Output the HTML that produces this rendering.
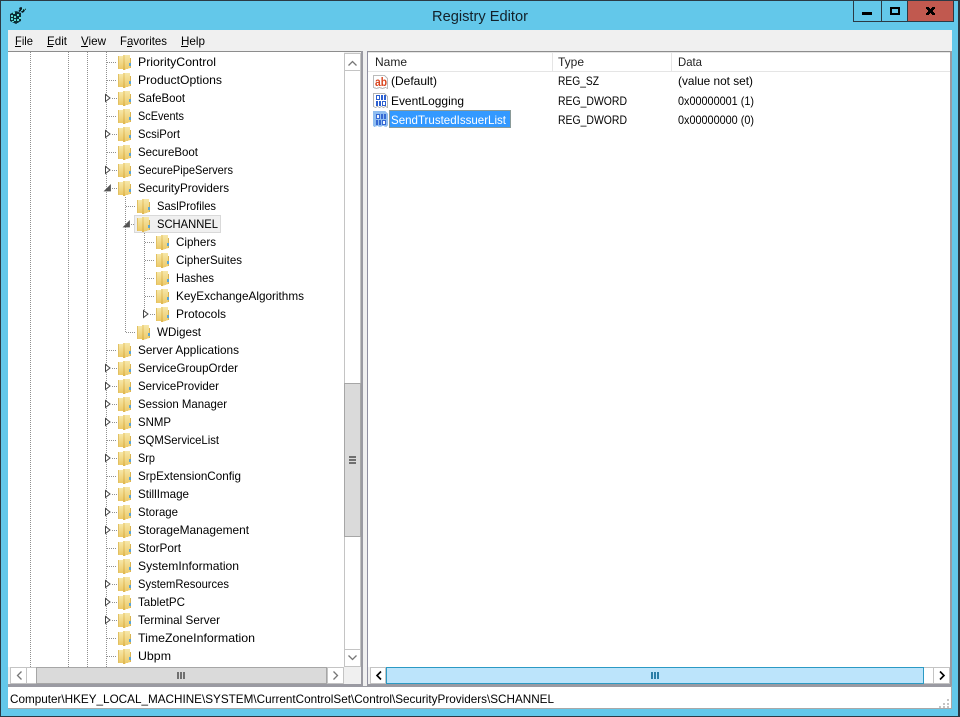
<!DOCTYPE html>
<html><head><meta charset="utf-8"><title>Registry Editor</title>
<style>
html,body{margin:0;padding:0;background:#63c8ea;width:960px;height:717px;overflow:hidden}
svg{display:block;position:absolute;left:0;top:0}
text{font-family:"Liberation Sans",sans-serif;font-size:12px;fill:#000;white-space:pre}
</style></head><body>
<svg width="960" height="717" viewBox="0 0 960 717" xmlns="http://www.w3.org/2000/svg" shape-rendering="crispEdges">
<defs>
<linearGradient id="fg" x1="0" y1="0" x2="0" y2="1"><stop offset="0" stop-color="#f6e7a8"/><stop offset="1" stop-color="#ecc968"/></linearGradient>
<linearGradient id="fd" x1="0" y1="0" x2="0" y2="1"><stop offset="0" stop-color="#f0d78a"/><stop offset="1" stop-color="#dfb64e"/></linearGradient>
<g id="f">
<path d="M1 2h6v13H1z" fill="url(#fg)"/>
<path d="M7 1h6v13l-6 2z" fill="url(#fg)"/>
<path d="M6 1h2v15H6z" fill="url(#fd)"/>
<path d="M1 2h1v13H1z" fill="#e2c062"/>
<path d="M13 4h1v10h-1z" fill="#d9b452"/>
<path d="M12 9h2v3h-2z" fill="#5aa6d6"/>
</g>
<g id="tc"><path d="M1.500 1.500L6 5 1.500 8.500z" fill="#fff" stroke="#444" shape-rendering="auto"/></g>
<g id="te"><path d="M6.500 1L6.500 7 .5 7z" fill="#555" stroke="#555" stroke-width=".8" shape-rendering="auto"/></g>
<g id="hl"><path d="M0 .5h10" stroke="#8f8f8f" stroke-dasharray="1 1"/></g>
<g id="digits">
<path d="M3 2h4v5H3zM8 2h2v5H8zM11 2h2v5h-2zM3 8h2v5H3zM6 8h2v5H6zM9 8h4v5H9z" fill="#2c5fd0"/>
<path d="M4 3h2v3H4zM10 9h2v3h-2z" fill="#fff"/>
</g>
<g id="bin">
<path d="M.5 .5h11l3 3v11l-2-1-2 1-2-1-2 1-2-1-2 1-2-1z" fill="#fff" stroke="#b4b4b4"/>
<use href="#digits"/>
</g>
</defs>

<!-- frame -->
<rect width="960" height="717" fill="#63c8ea"/>
<rect x="0" y="0" width="960" height="1" fill="#2b3a45"/>
<rect x="0" y="0" width="1" height="717" fill="#2b3a45"/>
<rect x="958" y="0" width="2" height="717" fill="#2b3a45"/>
<rect x="0" y="716" width="960" height="1" fill="#2b3a45"/>

<!-- window icon -->
<g>
<path d="M10 14l6-3 5 2v8l-5 3-6-3z" fill="#0c2f38"/>
<path d="M11 15h2v2h-2zM14 16h2v2h-2zM11 18h2v2h-2zM14 19h2v2h-2zM12 21h2v1h-2zM17 14h2v2h-2zM19 17h2v2h-2zM17 19h2v2h-2zM13 12h2v2h-2z" fill="#5fd9d4"/>
<path d="M18 11l3-3 1 1-2 3zM21 12l3-4 2 1-3 4zM19 8l2-1 1 1-2 2z" fill="#0b1c24"/>
<path d="M21 10l1-1 1 1-1 1zM23 9l1-1 1 1-1 1z" fill="#5fd9d4"/>
</g>

<text x="480" y="21" text-anchor="middle" textLength="96" lengthAdjust="spacingAndGlyphs" style="font-size:15px;fill:#13212a" shape-rendering="auto">Registry Editor</text>

<!-- caption buttons -->
<rect x="853.500" y="0.500" width="28" height="21" fill="#63c8ea" stroke="#2b3a45"/>
<rect x="881.500" y="0.500" width="26" height="21" fill="#63c8ea" stroke="#2b3a45"/>
<rect x="907.500" y="0.500" width="46" height="21" fill="#c1594f" stroke="#2b3a45"/>
<rect x="862" y="12" width="10" height="3" fill="#000"/>
<rect x="891" y="8" width="8" height="6" fill="none" stroke="#000" stroke-width="2"/>
<path d="M926 7h3v1h1v1h1V8h1V7h3v2h-1v1h-1v2h1v1h1v2h-3v-1h-1v-1h-1v1h-1v1h-3v-2h1v-1h1v-2h-1V9h-1z" fill="#000"/>

<!-- client bg -->
<rect x="8" y="30" width="944" height="679" fill="#f0f0f0"/>

<!-- menu -->
<text x="15" y="45" textLength="18" lengthAdjust="spacingAndGlyphs">File</text><rect x="15" y="46" width="6" height="1" fill="#000"/>
<text x="47" y="45" textLength="20" lengthAdjust="spacingAndGlyphs">Edit</text><rect x="47" y="46" width="6" height="1" fill="#000"/>
<text x="81" y="45" textLength="25" lengthAdjust="spacingAndGlyphs">View</text><rect x="81" y="46" width="7" height="1" fill="#000"/>
<text x="120" y="45" textLength="47" lengthAdjust="spacingAndGlyphs">Favorites</text><rect x="127" y="46" width="5" height="1" fill="#000"/>
<text x="181" y="45" textLength="24" lengthAdjust="spacingAndGlyphs">Help</text><rect x="181" y="46" width="7" height="1" fill="#000"/>

<!-- tree panel -->
<rect x="8" y="51" width="354" height="634" fill="#fff"/>
<rect x="8" y="51" width="354" height="1" fill="#8d8d8d"/>
<rect x="361" y="51" width="2" height="635" fill="#9a9aa2"/>
<rect x="8" y="684" width="355" height="2" fill="#9a9aa2"/>

<!-- tree lines -->
<g stroke="#8f8f8f" stroke-dasharray="1 1" fill="none">
<path d="M30.500 52V667M68.500 52V667M87.500 52V667M106.500 52V667"/>
<path d="M125.500 197V332M144.500 233V314"/>
</g>
<g>
<use href="#hl" x="107" y="62"/><use href="#hl" x="107" y="80"/><use href="#hl" x="112" y="98"/><use href="#hl" x="107" y="116"/><use href="#hl" x="112" y="134"/><use href="#hl" x="107" y="152"/><use href="#hl" x="112" y="170"/><use href="#hl" x="112" y="188"/>
<use href="#hl" x="126" y="206"/><use href="#hl" x="131" y="224"/>
<use href="#hl" x="145" y="242"/><use href="#hl" x="145" y="260"/><use href="#hl" x="145" y="278"/><use href="#hl" x="145" y="296"/><use href="#hl" x="150" y="314"/>
<use href="#hl" x="126" y="332"/>
<use href="#hl" x="107" y="350"/><use href="#hl" x="112" y="368"/><use href="#hl" x="112" y="386"/><use href="#hl" x="112" y="404"/><use href="#hl" x="112" y="422"/><use href="#hl" x="107" y="440"/><use href="#hl" x="112" y="458"/><use href="#hl" x="107" y="476"/><use href="#hl" x="112" y="494"/><use href="#hl" x="112" y="512"/><use href="#hl" x="112" y="530"/><use href="#hl" x="107" y="548"/><use href="#hl" x="107" y="566"/><use href="#hl" x="112" y="584"/><use href="#hl" x="112" y="602"/><use href="#hl" x="112" y="620"/><use href="#hl" x="107" y="638"/><use href="#hl" x="107" y="656"/>
</g>

<!-- selection outline for SCHANNEL -->
<rect x="134.500" y="215.500" width="86" height="17" fill="#f0f0f0" stroke="#d9d9d9"/>

<!-- expanders -->
<g>
<use href="#tc" x="104" y="93"/><use href="#tc" x="104" y="129"/><use href="#tc" x="104" y="165"/><use href="#te" x="104" y="184"/>
<use href="#te" x="123" y="220"/><use href="#tc" x="142" y="309"/>
<use href="#tc" x="104" y="363"/><use href="#tc" x="104" y="381"/><use href="#tc" x="104" y="399"/><use href="#tc" x="104" y="417"/><use href="#tc" x="104" y="453"/><use href="#tc" x="104" y="489"/><use href="#tc" x="104" y="507"/><use href="#tc" x="104" y="525"/><use href="#tc" x="104" y="579"/><use href="#tc" x="104" y="597"/><use href="#tc" x="104" y="615"/>
</g>

<!-- folders -->
<g>
<use href="#f" x="117" y="54"/><use href="#f" x="117" y="72"/><use href="#f" x="117" y="90"/><use href="#f" x="117" y="108"/><use href="#f" x="117" y="126"/><use href="#f" x="117" y="144"/><use href="#f" x="117" y="162"/><use href="#f" x="117" y="180"/>
<use href="#f" x="136" y="198"/><use href="#f" x="136" y="216"/>
<use href="#f" x="155" y="234"/><use href="#f" x="155" y="252"/><use href="#f" x="155" y="270"/><use href="#f" x="155" y="288"/><use href="#f" x="155" y="306"/>
<use href="#f" x="136" y="324"/>
<use href="#f" x="117" y="342"/><use href="#f" x="117" y="360"/><use href="#f" x="117" y="378"/><use href="#f" x="117" y="396"/><use href="#f" x="117" y="414"/><use href="#f" x="117" y="432"/><use href="#f" x="117" y="450"/><use href="#f" x="117" y="468"/><use href="#f" x="117" y="486"/><use href="#f" x="117" y="504"/><use href="#f" x="117" y="522"/><use href="#f" x="117" y="540"/><use href="#f" x="117" y="558"/><use href="#f" x="117" y="576"/><use href="#f" x="117" y="594"/><use href="#f" x="117" y="612"/><use href="#f" x="117" y="630"/><use href="#f" x="117" y="648"/><use href="#f" x="117" y="666"/>
</g>

<!-- tree text -->
<g shape-rendering="auto">
<text x="138" y="66" textLength="78" lengthAdjust="spacingAndGlyphs">PriorityControl</text>
<text x="138" y="84" textLength="84" lengthAdjust="spacingAndGlyphs">ProductOptions</text>
<text x="138" y="102" textLength="47" lengthAdjust="spacingAndGlyphs">SafeBoot</text>
<text x="138" y="120" textLength="46" lengthAdjust="spacingAndGlyphs">ScEvents</text>
<text x="138" y="138" textLength="42" lengthAdjust="spacingAndGlyphs">ScsiPort</text>
<text x="138" y="156" textLength="60" lengthAdjust="spacingAndGlyphs">SecureBoot</text>
<text x="138" y="174" textLength="95" lengthAdjust="spacingAndGlyphs">SecurePipeServers</text>
<text x="138" y="192" textLength="91" lengthAdjust="spacingAndGlyphs">SecurityProviders</text>
<text x="157" y="210" textLength="59" lengthAdjust="spacingAndGlyphs">SaslProfiles</text>
<text x="157" y="228" textLength="61" lengthAdjust="spacingAndGlyphs">SCHANNEL</text>
<text x="176" y="246" textLength="40" lengthAdjust="spacingAndGlyphs">Ciphers</text>
<text x="176" y="264" textLength="66" lengthAdjust="spacingAndGlyphs">CipherSuites</text>
<text x="176" y="282" textLength="38" lengthAdjust="spacingAndGlyphs">Hashes</text>
<text x="176" y="300" textLength="128" lengthAdjust="spacingAndGlyphs">KeyExchangeAlgorithms</text>
<text x="176" y="318" textLength="50" lengthAdjust="spacingAndGlyphs">Protocols</text>
<text x="157" y="336" textLength="44" lengthAdjust="spacingAndGlyphs">WDigest</text>
<text x="138" y="354" textLength="101" lengthAdjust="spacingAndGlyphs">Server Applications</text>
<text x="138" y="372" textLength="100" lengthAdjust="spacingAndGlyphs">ServiceGroupOrder</text>
<text x="138" y="390" textLength="81" lengthAdjust="spacingAndGlyphs">ServiceProvider</text>
<text x="138" y="408" textLength="89" lengthAdjust="spacingAndGlyphs">Session Manager</text>
<text x="138" y="426" textLength="33" lengthAdjust="spacingAndGlyphs">SNMP</text>
<text x="138" y="444" textLength="81" lengthAdjust="spacingAndGlyphs">SQMServiceList</text>
<text x="138" y="462" textLength="17" lengthAdjust="spacingAndGlyphs">Srp</text>
<text x="138" y="480" textLength="103" lengthAdjust="spacingAndGlyphs">SrpExtensionConfig</text>
<text x="138" y="498" textLength="51" lengthAdjust="spacingAndGlyphs">StillImage</text>
<text x="138" y="516" textLength="40" lengthAdjust="spacingAndGlyphs">Storage</text>
<text x="138" y="534" textLength="111" lengthAdjust="spacingAndGlyphs">StorageManagement</text>
<text x="138" y="552" textLength="43" lengthAdjust="spacingAndGlyphs">StorPort</text>
<text x="138" y="570" textLength="101" lengthAdjust="spacingAndGlyphs">SystemInformation</text>
<text x="138" y="588" textLength="91" lengthAdjust="spacingAndGlyphs">SystemResources</text>
<text x="138" y="606" textLength="47" lengthAdjust="spacingAndGlyphs">TabletPC</text>
<text x="138" y="624" textLength="82" lengthAdjust="spacingAndGlyphs">Terminal Server</text>
<text x="138" y="642" textLength="117" lengthAdjust="spacingAndGlyphs">TimeZoneInformation</text>
<text x="138" y="660" textLength="33" lengthAdjust="spacingAndGlyphs">Ubpm</text>
</g>

<!-- tree vertical scrollbar -->
<rect x="344" y="52" width="17" height="632" fill="#f0f0f0"/>
<rect x="344.500" y="53.500" width="16" height="612" fill="#fff" stroke="#c4c4c4"/>
<rect x="344.500" y="53.500" width="16" height="17" fill="#fff" stroke="#c4c4c4"/>
<rect x="344.500" y="649.500" width="16" height="17" fill="#fff" stroke="#c4c4c4"/>
<path d="M348.500 65.500l4-4 4 4M348.500 655.500l4 4 4-4" fill="none" stroke="#777" stroke-width="1.300" shape-rendering="auto"/>
<rect x="344.500" y="383.500" width="16" height="153" fill="#dadada" stroke="#a6a6a6"/>
<path d="M349 456h7v2h-7zM349 459h7v2h-7zM349 462h7v2h-7z" fill="#6f6f6f"/>

<!-- tree horizontal scrollbar -->
<rect x="8" y="667" width="353" height="17" fill="#f0f0f0"/>
<rect x="10.500" y="667.500" width="333" height="16" fill="#fff" stroke="#c4c4c4"/>
<rect x="10.500" y="667.500" width="16" height="16" fill="#fff" stroke="#c4c4c4"/>
<rect x="327.500" y="667.500" width="16" height="16" fill="#fff" stroke="#c4c4c4"/>
<path d="M21.500 671.500l-4 4 4 4M333.500 671.500l4 4-4 4" fill="none" stroke="#777" stroke-width="1.300" shape-rendering="auto"/>
<rect x="36.500" y="667.500" width="290" height="16" fill="#dadada" stroke="#a6a6a6"/>
<path d="M177 672h2v7h-2zM180 672h2v7h-2zM183 672h2v7h-2z" fill="#6f6f6f"/>

<!-- right panel -->
<rect x="367" y="51" width="585" height="635" fill="#fff"/>
<rect x="367" y="51" width="585" height="1" fill="#8d8d8d"/>
<rect x="367" y="51" width="1" height="635" fill="#8f8fa0"/>
<rect x="950" y="51" width="2" height="635" fill="#9a9aa2"/>
<rect x="367" y="684" width="585" height="2" fill="#9a9aa2"/>
<rect x="368" y="52" width="582" height="1" fill="#e5e5e5"/>
<rect x="368" y="71" width="582" height="1" fill="#e5e5e5"/>
<rect x="552" y="53" width="1" height="18" fill="#e5e5e5"/>
<rect x="671" y="53" width="1" height="18" fill="#e5e5e5"/>
<g shape-rendering="auto">
<text x="375" y="66" textLength="32" lengthAdjust="spacingAndGlyphs" style="fill:#222">Name</text>
<text x="558" y="66" textLength="26" lengthAdjust="spacingAndGlyphs" style="fill:#222">Type</text>
<text x="678" y="66" textLength="24" lengthAdjust="spacingAndGlyphs" style="fill:#222">Data</text>
</g>

<!-- ab icon -->
<path d="M373.500 75.500h11l3 3v10l-2-1-3 1-3-1-3 1-3-1z" fill="#fff" stroke="#bbb"/>
<text x="375" y="86" textLength="12" lengthAdjust="spacingAndGlyphs" style="font-size:12px;font-weight:bold;fill:#d8431c" shape-rendering="auto">ab</text>
<!-- binary icons -->
<use href="#bin" x="373" y="93"/>
<path d="M373 111h12l3 3v11l-2 2-3-1-3 1-3-1-3 1-1-1z" fill="#8fbdf0"/>
<use href="#digits" x="373" y="112" opacity=".9"/>

<!-- selection -->
<rect x="389" y="110" width="122" height="18" fill="#3399ff"/>
<rect x="389.500" y="110.500" width="121" height="17" fill="none" stroke="#e09a30" stroke-dasharray="1 1"/>

<g shape-rendering="auto">
<text x="391" y="85" textLength="46" lengthAdjust="spacingAndGlyphs">(Default)</text>
<text x="391" y="105" textLength="73" lengthAdjust="spacingAndGlyphs">EventLogging</text>
<text x="391" y="124" textLength="115" lengthAdjust="spacingAndGlyphs" style="fill:#fff">SendTrustedIssuerList</text>
<text x="558" y="85" textLength="41" lengthAdjust="spacingAndGlyphs">REG_SZ</text>
<text x="558" y="105" textLength="69" lengthAdjust="spacingAndGlyphs">REG_DWORD</text>
<text x="558" y="124" textLength="69" lengthAdjust="spacingAndGlyphs">REG_DWORD</text>
<text x="678" y="85" textLength="75" lengthAdjust="spacingAndGlyphs">(value not set)</text>
<text x="678" y="105" textLength="76" lengthAdjust="spacingAndGlyphs">0x00000001 (1)</text>
<text x="678" y="124" textLength="76" lengthAdjust="spacingAndGlyphs">0x00000000 (0)</text>
</g>

<!-- right horizontal scrollbar -->
<rect x="368" y="667" width="582" height="17" fill="#f0f0f0"/>
<rect x="370.500" y="667.500" width="579" height="16" fill="#fff" stroke="#c4c4c4"/>
<rect x="370.500" y="667.500" width="15" height="16" fill="#fff" stroke="#c4c4c4"/>
<rect x="933.500" y="667.500" width="16" height="16" fill="#fff" stroke="#c4c4c4"/>
<path d="M381 671.500l-4 4 4 4M940 671.500l4 4-4 4" fill="none" stroke="#000" stroke-width="1.600" shape-rendering="auto"/>
<rect x="386.500" y="667.500" width="537" height="16" fill="#bce4fb" stroke="#2b9ac4"/>
<path d="M651 672h2v7h-2zM654 672h2v7h-2zM657 672h2v7h-2z" fill="#2b7fa8"/>

<!-- status bar -->
<rect x="8" y="686" width="944" height="1" fill="#9a9aa2"/>
<rect x="8" y="687" width="944" height="22" fill="#fff"/>
<rect x="8" y="708" width="944" height="1" fill="#a8a8a8"/>
<rect x="951" y="686" width="1" height="23" fill="#a8a8a8"/>
<g shape-rendering="auto">
<text x="10" y="703" textLength="544" lengthAdjust="spacingAndGlyphs">Computer\HKEY_LOCAL_MACHINE\SYSTEM\CurrentControlSet\Control\SecurityProviders\SCHANNEL</text>
</g>
<path d="M947 699h2v2h-2zM943 703h2v2h-2zM947 703h2v2h-2zM939 706h2v2h-2zM943 706h2v2h-2zM947 706h2v2h-2z" fill="#c4c4c4"/>
</svg>
</body></html>
